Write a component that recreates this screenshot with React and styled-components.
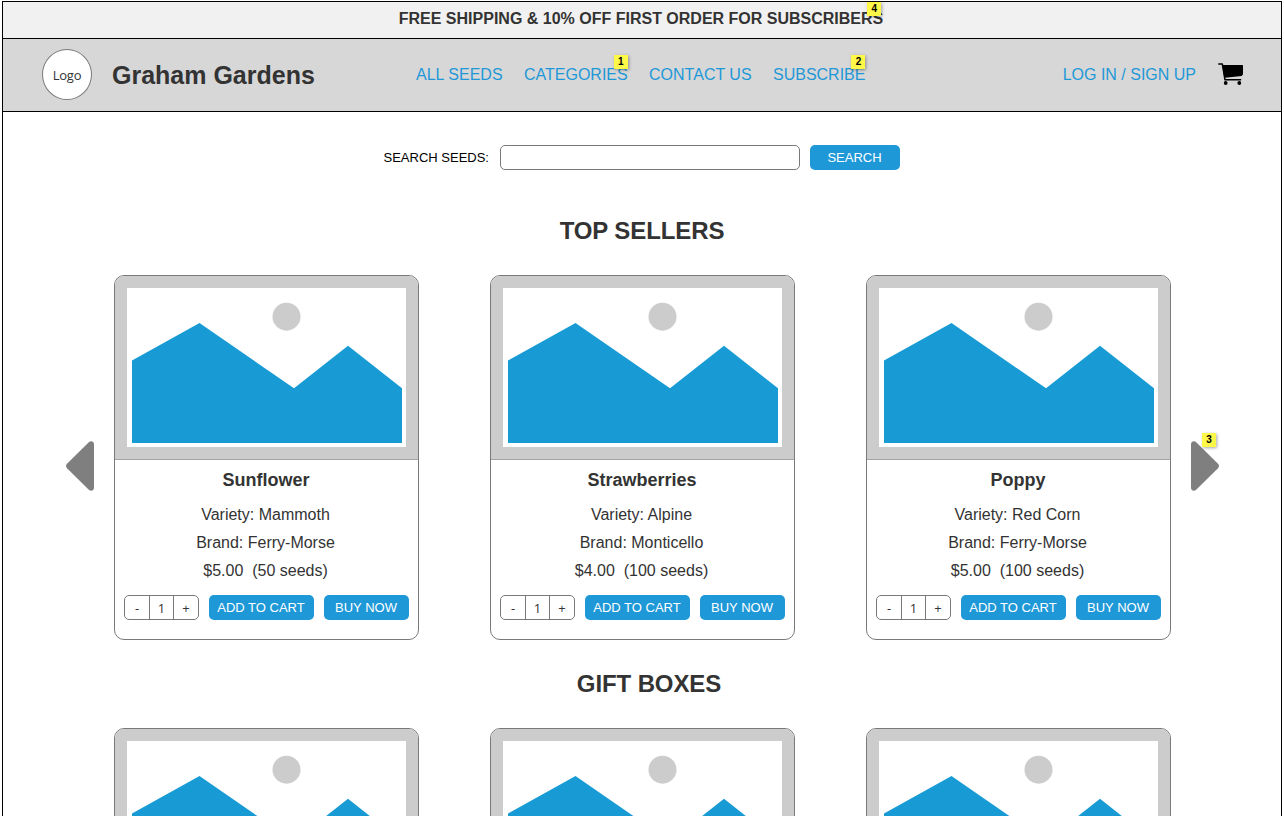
import React from 'react';
import styled, { createGlobalStyle } from 'styled-components';

const GlobalStyle = createGlobalStyle`
  *, *::before, *::after { box-sizing: border-box; }
  html, body { margin: 0; height: 816px; overflow: hidden; background: #fff; }
  body { font-family: 'Liberation Sans', Arial, sans-serif; color: #333; }
  button, input { font: inherit; }
`;

const Page = styled.div`
  width: 1280px;
  height: 815px;
  margin: 1px 0 0 2px;
  border: 1px solid #000;
  border-bottom: 0;
  overflow: hidden;
`;

const Banner = styled.div`
  height: 37px;
  display: flex;
  justify-content: center;
  align-items: center;
  padding: 0 2px 3px 0;
  background: #f2f1f1;
  border-bottom: 1px solid #000;
  font-size: 16px;
  font-weight: 700;
`;

const Anchor = styled.span`
  position: relative;
  white-space: nowrap;
`;

const Note = styled.span`
  position: absolute;
  top: ${(p) => p.$top}px;
  right: ${(p) => p.$right}px;
  width: 14px;
  height: 14px;
  background: #fff849;
  color: #000;
  font: 700 10px/14px 'Liberation Sans', Arial, sans-serif;
  text-align: center;
  box-shadow: 1px 1px 3px rgba(0, 0, 0, 0.35);
`;

const Header = styled.header`
  height: 73px;
  display: flex;
  align-items: center;
  padding: 0 37px 0 39px;
  background: #d7d7d7;
  border-bottom: 1px solid #000;
`;

const Logo = styled.div`
  width: 50px;
  height: 51px;
  margin-bottom: 2px;
  padding-top: 2px;
  flex: none;
  display: flex;
  align-items: center;
  justify-content: center;
  background: #fff;
  border: 1px solid #797979;
  border-radius: 50%;
  font: 13px/18px 'Open Sans', sans-serif;
  letter-spacing: -0.2px;
`;

const Brand = styled.h1`
  width: 304px;
  margin: 0 0 0 20px;
  font-size: 25px;
  line-height: 30px;
`;

const Nav = styled.nav`
  flex: 1;
  display: flex;
  gap: 21.4px;
`;

const Link = styled.a`
  position: relative;
  color: #1e98d7;
  font-size: 16px;
  line-height: 18px;
  padding-bottom: 1px;
  white-space: nowrap;
`;

const CartIcon = styled.svg`
  width: 26px;
  height: 22px;
  margin: 0 0 3px 22px;
`;

const Search = styled.form`
  display: flex;
  align-items: center;
  height: 25px;
  margin: 33px 0 0 380.5px;
  font-size: 13px;
  color: #000;
`;

const SearchLabel = styled.label`
  width: 116.5px;
  white-space: nowrap;
`;

const SearchInput = styled.input`
  width: 300px;
  height: 25px;
  margin-right: 10px;
  border: 1px solid #797979;
  border-radius: 5px;
  outline: 0;
`;

const Button = styled.button`
  width: ${(p) => p.$width}px;
  height: 25px;
  padding: 0 1px 0 0;
  border: 0;
  border-radius: 5px;
  background: #1e98d7;
  color: #fff;
  font-size: 13px;
  line-height: 25px;
  text-align: center;
  white-space: nowrap;
`;

const SectionTitle = styled.h2`
  margin: ${(p) => p.$top}px 0 0 ${(p) => p.$shift}px;
  font-size: 24px;
  line-height: 28px;
  letter-spacing: -0.1px;
  text-align: center;
`;

const Carousel = styled.div`
  display: flex;
  align-items: center;
  padding: 0 62px 0 63px;
  margin-top: 30px;
`;

const Cards = styled.div`
  flex: 1;
  display: flex;
  justify-content: center;
  gap: 71px;
`;

const ArrowHolder = styled.div`
  position: relative;
  width: 28px;
  height: 50px;
  margin-top: 17px;
`;

const Card = styled.article`
  width: 305px;
  height: 365px;
  border: 1px solid #797979;
  border-radius: 10px;
  overflow: hidden;
  background: #fff;
  text-align: center;
`;

const Picture = styled.svg`
  display: block;
  width: 303px;
  height: 184px;
  border-bottom: 1px solid #a3a3a3;
  background: #ccc;
`;

const Name = styled.h3`
  margin: 9px 1px 0 0;
  font-size: 18px;
  line-height: 22px;
`;

const Details = styled.div`
  margin: 10px 2px 0 0;
  font-size: 16px;
  line-height: 28px;
  white-space: pre;
`;

const Actions = styled.div`
  display: flex;
  gap: 10px;
  margin: 10px 9px 0;
`;

const Quantity = styled.div`
  width: 75px;
  height: 25px;
  display: grid;
  grid-template-columns: 24px 24px 1fr;
  border: 1px solid #797979;
  border-radius: 5px;
  font: 13px/24px 'Open Sans', sans-serif;
`;

const QuantityCell = styled.span`
  height: 23px;
  & + & { border-left: 1px solid #797979; }
`;

const topSellers = [
  { name: 'Sunflower', variety: 'Mammoth', brand: 'Ferry-Morse', price: '$5.00  (50 seeds)' },
  { name: 'Strawberries', variety: 'Alpine', brand: 'Monticello', price: '$4.00  (100 seeds)' },
  { name: 'Poppy', variety: 'Red Corn', brand: 'Ferry-Morse', price: '$5.00  (100 seeds)' },
];

const giftBoxes = ['first', 'second', 'third'];

function Landscape() {
  return (
    <Picture viewBox="0 0 303 183" aria-hidden="true">
      <rect x="12" y="12" width="279" height="159" fill="#fff" />
      <circle cx="171.5" cy="40.7" r="14" fill="#ccc" />
      <path d="M17 84.5 84.5 47 179 112.3 233 69.8 287 112.3V167H17Z" fill="#189bd5" />
    </Picture>
  );
}

function Arrow({ flip, children }) {
  return (
    <ArrowHolder>
      <svg width="28" height="50" viewBox="0 0 28 50" aria-hidden="true">
        <path
          transform={flip ? 'translate(28 0) scale(-1 1)' : undefined}
          d="M28 3.2C28 .3 25-.9 22.8 1.2L1 22.8Q-1 25 1 27.2L22.8 48.8C25 50.9 28 49.7 28 46.8Z"
          fill="#7f7f7f"
        />
      </svg>
      {children}
    </ArrowHolder>
  );
}

function ProductCard({ item }) {
  return (
    <Card>
      <Landscape />
      <Name>{item.name}</Name>
      <Details>
        <div>Variety: {item.variety}</div>
        <div>Brand: {item.brand}</div>
        <div>{item.price}</div>
      </Details>
      <Actions>
        <Quantity>
          <QuantityCell>-</QuantityCell>
          <QuantityCell>1</QuantityCell>
          <QuantityCell>+</QuantityCell>
        </Quantity>
        <Button $width={105}>ADD TO CART</Button>
        <Button $width={85}>BUY NOW</Button>
      </Actions>
    </Card>
  );
}

export default function App() {
  return (
    <>
      <GlobalStyle />
      <Page>
        <Banner>
          <Anchor>
            FREE SHIPPING &amp; 10% OFF FIRST ORDER FOR SUBSCRIBERS
            <Note $top={-8} $right={2}>4</Note>
          </Anchor>
        </Banner>
        <Header>
          <Logo>Logo</Logo>
          <Brand>Graham Gardens</Brand>
          <Nav>
            <Link>ALL SEEDS</Link>
            <Link>CATEGORIES<Note $top={-11} $right={0}>1</Note></Link>
            <Link>CONTACT US</Link>
            <Link>SUBSCRIBE<Note $top={-11} $right={0}>2</Note></Link>
          </Nav>
          <Link>LOG IN / SIGN UP</Link>
          <CartIcon viewBox="0 0 26 22" aria-hidden="true">
            <path d="M.8 .9H4.3L7 16.8H22.6M6.8 14.1 23.5 12.2" fill="none" stroke="#000" strokeWidth="1.5" strokeLinejoin="round" strokeLinecap="round" />
            <path d="M4.2 2H24.4Q25 2 25 2.6V11.2Q25 11.9 24.2 12L6.2 14Z" />
            <circle cx="7.7" cy="20" r="1.9" />
            <circle cx="21.3" cy="20" r="1.9" />
          </CartIcon>
        </Header>
        <Search>
          <SearchLabel htmlFor="seeds">SEARCH SEEDS:</SearchLabel>
          <SearchInput id="seeds" />
          <Button type="button" $width={90}>SEARCH</Button>
        </Search>
        <SectionTitle $top={47} $shift={0}>TOP SELLERS</SectionTitle>
        <Carousel>
          <Arrow />
          <Cards>
            {topSellers.map((item) => <ProductCard key={item.name} item={item} />)}
          </Cards>
          <Arrow flip><Note $top={-8} $right={3}>3</Note></Arrow>
        </Carousel>
        <SectionTitle $top={30} $shift={14}>GIFT BOXES</SectionTitle>
        <Carousel>
          <Cards>
            {giftBoxes.map((id) => <Card key={id}><Landscape /></Card>)}
          </Cards>
        </Carousel>
      </Page>
    </>
  );
}
